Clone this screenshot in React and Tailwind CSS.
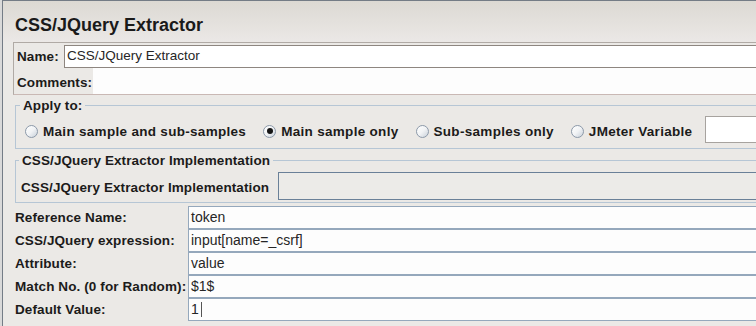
import React from "react";

const labelCls = "font-bold text-[13.5px] tracking-[0.1px] leading-[15px] text-[#1c1b1a] whitespace-nowrap";

const fields = [
  ["Reference Name:", "token"],
  ["CSS/JQuery expression:", "input[name=_csrf]"],
  ["Attribute:", "value"],
  ["Match No. (0 for Random):", "$1$"],
  ["Default Value:", "1"],
];

const Radio = ({ checked, label }) => (
  <div className="flex items-center gap-[5px]">
    <span className="flex h-[13px] w-[13px] items-center justify-center rounded-full border border-[#8c99a9] bg-linear-to-br from-white via-[#f1f3f5] to-[#c9d1da]">
      {checked && <span className="h-[6px] w-[6px] rounded-full bg-[#151515]" />}
    </span>
    <span className={`${labelCls} tracking-[0.3px]`}>{label}</span>
  </div>
);

const App = () => {
  return (
    <div className="h-[326px] w-[756px] overflow-hidden bg-[#d9d9d9] pl-[2px] font-['Liberation_Sans',Arial,sans-serif]">
      <div className="h-full border-l border-t border-[#747c86] bg-[#ebe9e6]">
        {/* Title */}
        <div className="h-[41px] bg-linear-to-b from-[#dcd9d3] to-[#ebe8e6] pl-[12px] pt-[14px] text-[18px] font-bold leading-[20px] text-[#1a1a1a]">
          CSS/JQuery Extractor
        </div>

        {/* Name / Comments */}
        <div className="-mr-[20px] ml-[10px] border border-[#b0aaa5] border-b-[#c9b8b4]">
          <div className="mt-[2px] flex h-[23px]">
            <div className={`${labelCls} flex w-[50px] items-center pl-[3px]`}>Name:</div>
            <div className="flex flex-1 items-center border border-[#8e8680] bg-white pl-[2px] text-[13.5px] text-[#262626]">
              CSS/JQuery Extractor
            </div>
          </div>
          <div className="flex h-[26px]">
            <div className={`${labelCls} flex w-[79px] items-center pl-[3px] pt-[3px]`}>Comments:</div>
            <div className="flex-1 bg-[#fdfdfd]" />
          </div>
        </div>

        {/* Apply to */}
        <fieldset className="-mr-[20px] ml-[12px] mt-[3px] border border-[#b6c6d5]">
          <legend className={`${labelCls} ml-[4px] px-[3px]`}>Apply to:</legend>
          <div className="flex items-center gap-[13px] pb-[5px] pl-[9px] pt-[3px]">
            <div className="mt-[3px] flex items-center gap-[17px]">
              <Radio label="Main sample and sub-samples" />
              <Radio checked label="Main sample only" />
              <Radio label="Sub-samples only" />
              <Radio label="JMeter Variable" />
            </div>
            <div className="h-[27px] w-[80px] border border-[#a7a39f] bg-white" />
          </div>
        </fieldset>

        {/* Implementation */}
        <fieldset className="-mr-[20px] ml-[12px] mt-[4px] border border-[#b6c6d5]">
          <legend className={`${labelCls} ml-[3px] px-[3px]`}>CSS/JQuery Extractor Implementation</legend>
          <div className="flex pb-[2px] pt-[4px]">
            <div className={`${labelCls} flex w-[262px] items-center pl-[5px] pt-[2px]`}>
              CSS/JQuery Extractor Implementation
            </div>
            <div className="h-[28px] flex-1 border border-[#6a8098] bg-[#ecebe8]" />
          </div>
        </fieldset>

        {/* Fields */}
        <div className="-mr-[20px] mt-[3px]">
          {fields.map(([label, value], i) => (
            <div key={label} className="flex h-[23px]">
              <div className={`${labelCls} flex w-[185px] items-center pl-[12px]`}>{label}</div>
              <div className="flex flex-1 items-center border border-[#95a8bc] bg-[#fdfdfd] pl-[2px] text-[14px] text-[#262626]">
                {value}
                {i === fields.length - 1 && <span className="ml-[2px] h-[15px] w-px bg-[#555]" />}
              </div>
            </div>
          ))}
        </div>
      </div>
    </div>
  );
};

export default App;
